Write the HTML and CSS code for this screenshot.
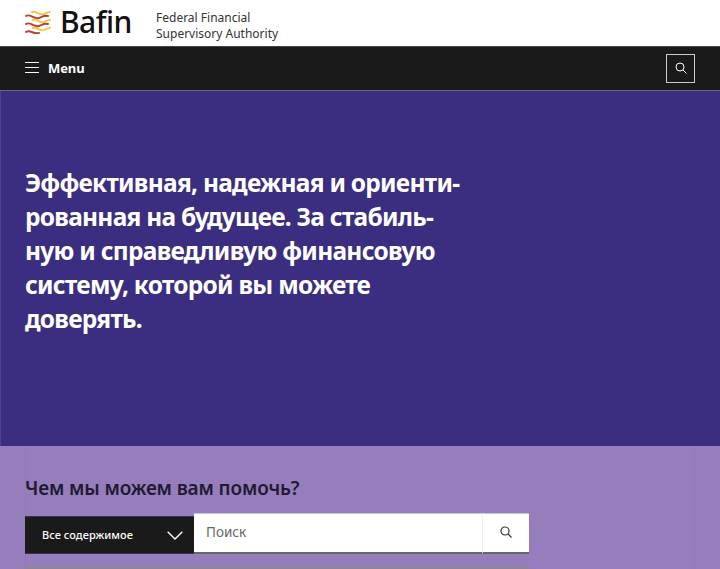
FILE: index.html
```html
<!DOCTYPE html>
<html lang="ru">
<head>
<meta charset="utf-8">
<title>Bafin</title>
<link rel="stylesheet" href="styles.css">
</head>
<body>
<header class="top">
  <svg class="logo-mark" viewBox="0 0 26 24" width="26" height="24" fill="none" stroke-width="2" stroke-linecap="round">
    <path d="M7 2c4-2 7 4 12 2 2-1 3-2 6-2" stroke="#f2c84a"/>
    <path d="M1 6c4-3 8 4 13 2 3-1 5-3 9-2" stroke="#b8403a"/>
    <path d="M8 10c4-2 6 4 11 2 2-1 3-2 6-2" stroke="#f2c84a"/>
    <path d="M1 14c4-3 8 4 13 2 3-1 5-3 9-2" stroke="#b8403a"/>
    <path d="M8 18c4-2 6 4 11 2 2-1 3-2 6-2" stroke="#f2c84a"/>
    <path d="M1 22c4-3 8 3 13 1" stroke="#b8403a"/>
  </svg>
  <span class="brand">Bafin</span>
  <span class="tagline">Federal Financial<br>Supervisory Authority</span>
</header>
<nav class="bar">
  <div class="menu">
    <svg class="burger" viewBox="0 0 14 11" width="14" height="11" stroke="#fff" stroke-width="1"><path d="M0 .5h14M0 5.500h14M0 10.500h14"/></svg>
    <span>Menu</span>
  </div>
  <button class="search-toggle" type="button" aria-label="Search">
    <svg viewBox="0 0 12 12" width="12" height="12" fill="none" stroke="#fff" stroke-width="1"><circle cx="5" cy="5" r="4"/><path d="M8 8l3.500 3.500"/></svg>
  </button>
</nav>
<section class="hero">
  <h1 class="hero-title">Эффективная, надежная и ориенти-<br>рованная на будущее. За стабиль-<br>ную и справедливую финансовую<br>систему, которой вы можете<br>доверять.</h1>
</section>
<section class="help">
  <div class="help-inner">
    <h2 class="help-title">Чем мы можем вам помочь?</h2>
    <div class="search">
      <div class="scope">
        <span class="scope-label">Все содержимое</span>
        <svg viewBox="0 0 16 9" width="16" height="9" fill="none" stroke="#fff" stroke-width="1.400"><path d="M.7.7L8 8l7.300-7.300"/></svg>
      </div>
      <div class="field">Поиск</div>
      <div class="go">
        <svg viewBox="0 0 12 12" width="12" height="12" fill="none" stroke="#333" stroke-width="1.200"><circle cx="5" cy="5" r="4"/><path d="M8 8l3.500 3.500"/></svg>
      </div>
    </div>
    <div class="rule"></div>
  </div>
</section>
</body>
</html>
```
FILE: styles.css
```css
* { box-sizing: border-box; }
html, body { margin: 0; padding: 0; }
body {
  width: 720px;
  height: 569px;
  overflow: hidden;
  background: #957ebb;
  font-family: "Noto Sans", "Open Sans", sans-serif;
}
.top {
  height: 46px;
  background: #fff;
  display: flex;
  align-items: center;
  padding-left: 25px;
}
.logo-mark { flex: none; margin-right: 9px; margin-top: -2px; }
.brand {
  font-size: 30px;
  font-weight: 500;
  color: #111;
  line-height: 1;
  width: 95px;
  letter-spacing: -.5px;
  margin-top: -2px;
}
.tagline {
  font-size: 12px;
  line-height: 15.500px;
  color: #333;
  margin-top: 5px;
  margin-left: 1px;
}
.bar {
  height: 45px;
  background: #1a1a1a;
  border-top: 1px solid #444;
  border-bottom: 1px solid #6a6a80;
  display: flex;
  align-items: center;
  justify-content: space-between;
  padding: 0 25px;
}
.menu {
  display: flex;
  align-items: center;
  gap: 9px;
  color: #fff;
  font-size: 13px;
  letter-spacing: -.1px;
  font-weight: 700;
  margin-top: -2px;
}
.search-toggle {
  width: 29px;
  height: 29px;
  padding: 0;
  background: transparent;
  border: 1px solid #ccc;
  display: flex;
  align-items: center;
  justify-content: center;
  margin-top: -1px;
}
.hero {
  height: 355px;
  background: #3b2e80;
  border-left: 1px solid #4d4290;
  padding: 75px 0 0 24px;
}
.hero-title {
  margin: 0;
  color: #fff;
  font-size: 24.500px;
  letter-spacing: -.74px;
  line-height: 34px;
  font-weight: 700;
  white-space: nowrap;
}
.help {
  height: 123px;
  padding: 0 25px;
}
.help-inner {
  height: 123px;
  width: 670px;
  padding-top: 30px;
  border-left: 1px solid #917ab6;
  border-right: 1px solid #917ab6;
}
.help-title {
  margin: 0 0 13px -1px;
  font-size: 19px;
  letter-spacing: -.15px;
  line-height: 24px;
  font-weight: 600;
  color: #221a33;
}
.search {
  display: flex;
  width: 504px;
  height: 41px;
  margin-left: -1px;
}
.scope {
  width: 169px;
  height: 38px;
  margin-top: 3px;
  background: #1a1a1a;
  border-top: 1px solid #3d3052;
  border-bottom: 1px solid #3d3052;
  color: #fff;
  font-size: 11px;
  letter-spacing: .05px;
  font-weight: 500;
  display: flex;
  align-items: center;
  justify-content: space-between;
  padding: 0 11px 0 17px;
}
.scope-label { margin-top: -2px; }
.field {
  flex: 1;
  background: #fff;
  border-top: 1px solid #c9c4d4;
  border-bottom: 2px solid #666;
  color: #666;
  font-size: 13.500px;
  line-height: 37px;
  padding-left: 12px;
}
.go {
  width: 47px;
  background: #fff;
  border-top: 1px solid #c9c4d4;
  border-left: 1px solid #eee;
  border-bottom: 2px solid #666;
  display: flex;
  align-items: center;
  justify-content: center;
  padding-bottom: 3px;
}
.rule {
  width: 504px;
  height: 2px;
  margin-top: 13px;
  margin-left: -1px;
  background: #8a8a8a;
}
```
